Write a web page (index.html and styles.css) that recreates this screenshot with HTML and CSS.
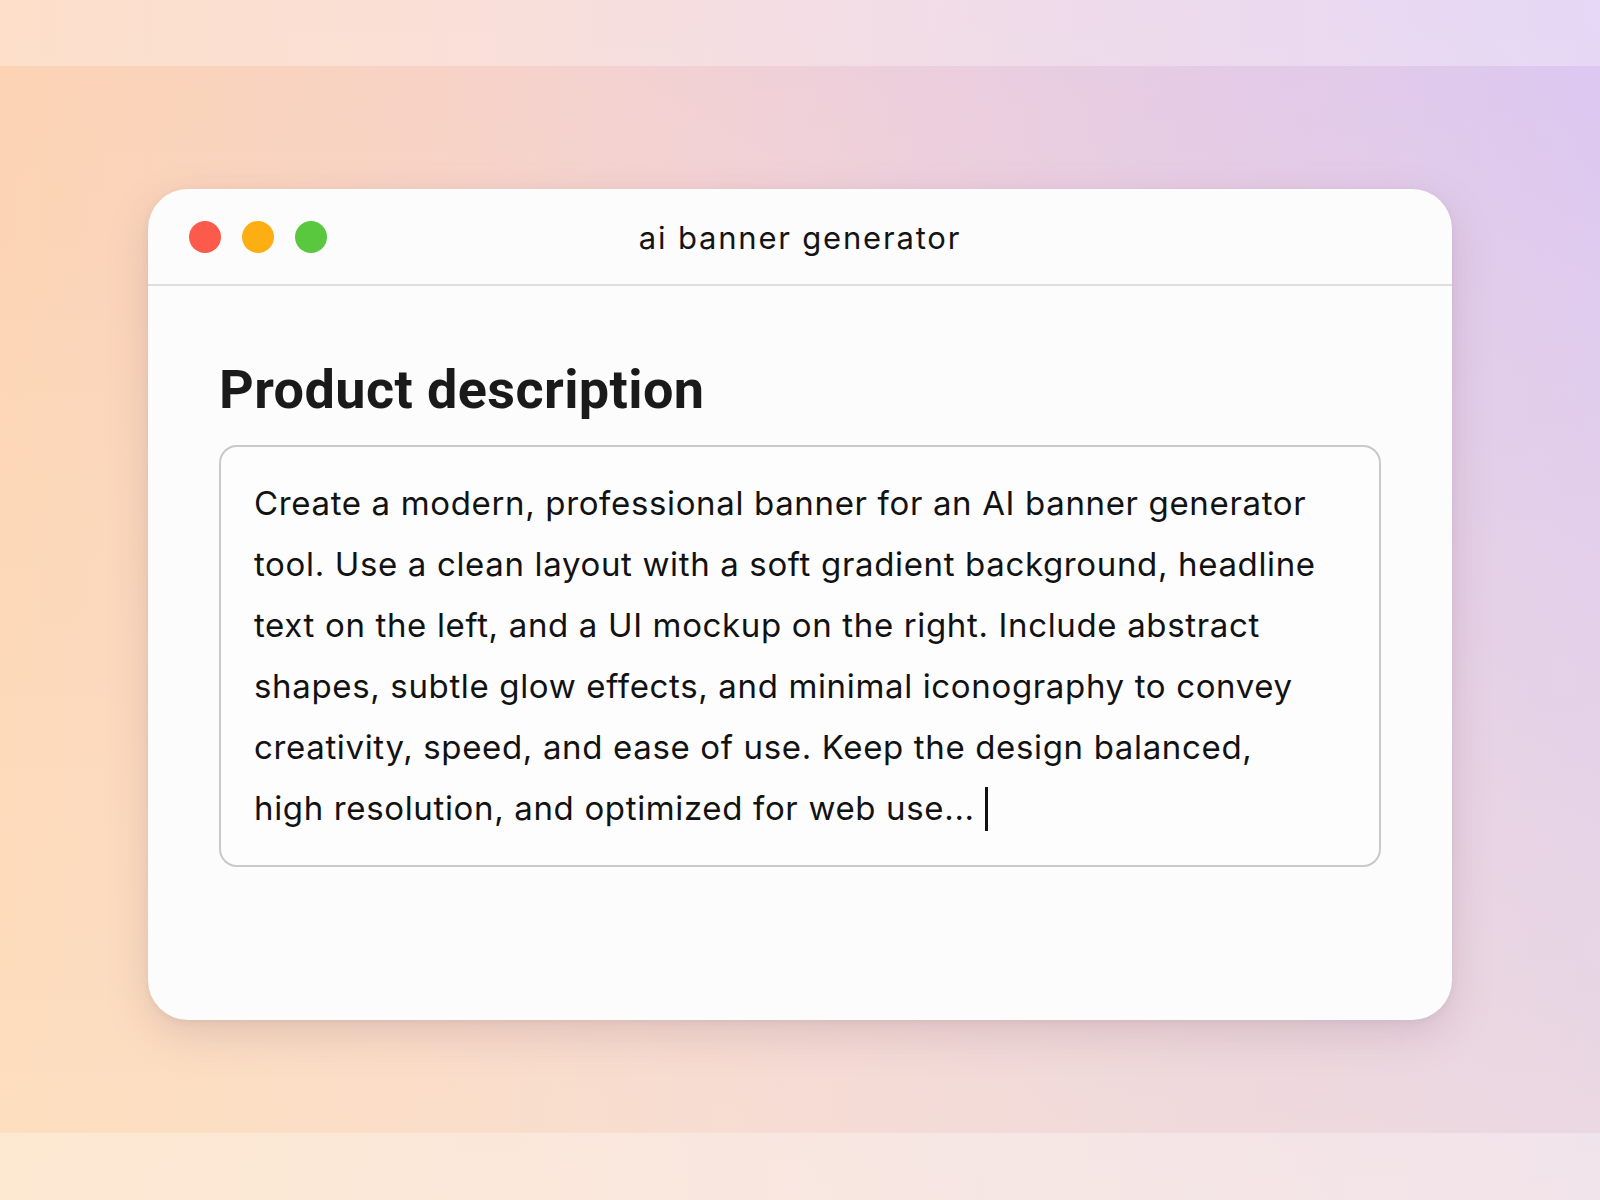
FILE: index.html
```html
<!DOCTYPE html>
<html lang="en">
<head>
<meta charset="utf-8">
<title>ai banner generator</title>
<link rel="stylesheet" href="styles.css">
</head>
<body>
<div class="page">
  <div class="band band-top"></div>
  <main class="stage">
    <div class="window">
      <header class="titlebar">
        <div class="lights">
          <span class="dot dot-red"></span>
          <span class="dot dot-yellow"></span>
          <span class="dot dot-green"></span>
        </div>
        <div class="title">ai banner generator</div>
        <div class="spacer"></div>
      </header>
      <section class="content">
        <h1 class="heading">Product description</h1>
        <div class="field">
          <p class="field-text">Create a modern, professional banner for an AI banner generator<br>tool. Use a clean layout with a soft gradient background, headline<br>text on the left, and a UI mockup on the right. Include abstract<br>shapes, subtle glow effects, and minimal iconography to convey<br>creativity, speed, and ease of use. Keep the design balanced,<br>high resolution, and optimized for web use... <span class="caret"></span></p>
        </div>
      </section>
    </div>
  </main>
  <div class="band band-bottom"></div>
</div>
</body>
</html>
```

FILE: styles.css
```css
* { box-sizing: border-box; }

html, body {
  margin: 0;
  padding: 0;
}

body {
  width: 1600px;
  height: 1200px;
  overflow: hidden;
  font-family: Inter, Roboto, "Liberation Sans", sans-serif;
  color: #1b1b1b;
}

.page {
  width: 1600px;
  height: 1200px;
  display: flex;
  flex-direction: column;
  background:
    linear-gradient(180deg, rgba(255, 235, 200, 0) 0%, rgba(255, 238, 205, 0.45) 100%),
    linear-gradient(90deg, #fcd2b3 0%, #f8d2c4 25%, #efcfd9 50%, #e4cae6 75%, #dbc7f2 100%);
}

.band {
  flex: 0 0 auto;
  background: rgba(255, 255, 255, 0.3);
}

.band-top { height: 66px; }
.band-bottom { height: 67px; }

.stage {
  flex: 1 1 auto;
  padding-top: 123px;
}

.window {
  width: 1304px;
  height: 831px;
  margin: 0 auto;
  background: #fcfcfc;
  border-radius: 40px;
  box-shadow: 0 14px 40px rgba(140, 100, 120, 0.22), 0 2px 6px rgba(140, 100, 120, 0.10);
  display: flex;
  flex-direction: column;
  overflow: hidden;
}

.titlebar {
  height: 97px;
  flex: 0 0 auto;
  display: grid;
  grid-template-columns: 1fr auto 1fr;
  align-items: center;
  padding: 0 41px;
  border-bottom: 2px solid #dedede;
}

.lights {
  display: flex;
  gap: 21px;
  align-items: center;
}

.dot {
  width: 32px;
  height: 32px;
  border-radius: 50%;
  display: block;
}

.dot-red { background: #fc5a4a; }
.dot-yellow { background: #fdae13; }
.dot-green { background: #5ac83f; }

.title {
  font-size: 31px;
  font-weight: 400;
  color: #141414;
  letter-spacing: 1.8px;
  padding-top: 2px;
}

.content {
  flex: 1 1 auto;
  padding: 77px 71px 0;
}

.heading {
  margin: 0 0 28px;
  font-family: Roboto, "Liberation Sans", sans-serif;
  font-size: 54px;
  line-height: 54px;
  font-weight: 700;
  color: #1a1a1a;
  letter-spacing: 0.4px;
}

.field {
  border: 2px solid #c9c9c9;
  border-radius: 18px;
  padding: 26px 30px 26px 33px;
  background: #fdfdfd;
}

.field-text {
  margin: 0;
  font-size: 33px;
  line-height: 61px;
  letter-spacing: 0.65px;
  color: #121212;
}

.caret {
  display: inline-block;
  width: 3px;
  height: 44px;
  background: #111;
  vertical-align: -11px;
  margin-left: 0;
}
```
